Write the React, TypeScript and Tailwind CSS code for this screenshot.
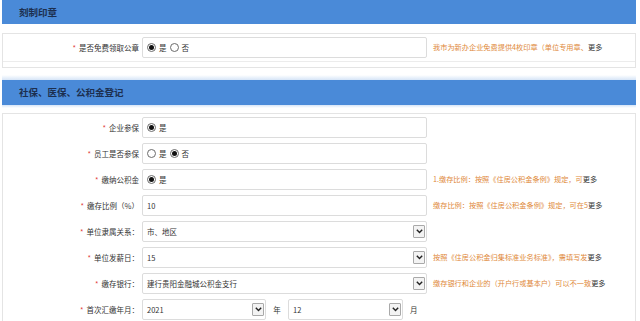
import React from 'react';

const FONT = '"Noto Sans CJK SC", "Noto Sans", sans-serif';

function Radio({ checked }: { checked?: boolean }) {
  return (
    <span className="w-[9px] h-[9px] rounded-full border border-[#6b6b6b] bg-white flex items-center justify-center shrink-0">
      {checked && <span className="w-[5px] h-[5px] rounded-full bg-[#111]" />}
    </span>
  );
}

function Chevron() {
  return (
    <span className="w-[12px] h-[13px] border border-[#a9a9a9] bg-[#f3f3f3] flex items-center justify-center shrink-0 rounded-[1px]">
      <svg width="7" height="5" viewBox="0 0 7 5">
        <path d="M0.8 0.8 L3.5 3.6 L6.2 0.8" fill="none" stroke="#222" strokeWidth="1.4" />
      </svg>
    </span>
  );
}

function Box({ children, w = 'w-[285px]' }: { children?: React.ReactNode; w?: string }) {
  return (
    <div className={`${w} h-[21px] border border-[#dcdcdc] rounded-[2px] bg-white flex items-center pl-[4px] pr-[1px] gap-[3px] text-[7.5px] text-[#333] shrink-0`}>
      {children}
    </div>
  );
}

function SelectBox({ value, w = 'w-[285px]' }: { value: string; w?: string }) {
  return (
    <Box w={w}>
      <span className="flex-1">{value}</span>
      <Chevron />
    </Box>
  );
}

function Label({ text }: { text: string }) {
  return (
    <div className="w-[139px] pr-[3px] text-right text-[7.5px] text-[#333] shrink-0">
      <span className="text-[#e23b3b] mr-[3px]">*</span>
      {text}
    </div>
  );
}

function Hint({ text }: { text?: string }) {
  if (!text) return null;
  return (
    <div className="ml-[6px] text-[7.2px] text-[#e0893a] whitespace-nowrap">
      {text}
      <span className="text-[#333]">更多</span>
    </div>
  );
}

function Row({ label, hint, children }: { label: string; hint?: string; children: React.ReactNode }) {
  return (
    <div className="flex items-center h-[21px]">
      <Label text={label} />
      {children}
      <Hint text={hint} />
    </div>
  );
}

function Header({ title, h }: { title: string; h: string }) {
  return (
    <div className={`${h} bg-[#4a8ad8] flex items-center pl-[17px] text-[9.5px] font-bold text-[#1c2f4f]`}>
      {title}
    </div>
  );
}

export default function App() {
  return (
    <div className="w-[640px] h-[321px] overflow-hidden bg-white pl-[2px] pr-[4px]" style={{ fontFamily: FONT }}>
      <Header title="刻制印章" h="h-[24px]" />

      <div className="mt-[9px] h-[35px] border border-[#e4e4e4]">
        <div className="h-[28px] border-b border-[#ececec] flex items-center">
          <Row label="是否免费领取公章" hint="我市为新办企业免费提供4枚印章（单位专用章、">
            <Box>
              <Radio checked />
              <span>是</span>
              <Radio />
              <span>否</span>
            </Box>
          </Row>
        </div>
      </div>

      <div className="mt-[7px] h-[5px] bg-gradient-to-b from-white to-[#d6e5f7]" />
      <Header title="社保、医保、公积金登记" h="h-[25px]" />
      <div className="h-[3px] bg-gradient-to-b from-[#d6e5f7] to-white" />

      <div className="mt-[5px] border border-b-0 border-[#e4e4e4] pt-[3px] flex flex-col gap-[5px] h-[220px]">
        <Row label="企业参保">
          <Box>
            <Radio checked />
            <span>是</span>
          </Box>
        </Row>
        <Row label="员工是否参保">
          <Box>
            <Radio />
            <span>是</span>
            <Radio checked />
            <span>否</span>
          </Box>
        </Row>
        <Row label="缴纳公积金" hint="1.缴存比例：按照《住房公积金条例》规定，可">
          <Box>
            <Radio checked />
            <span>是</span>
          </Box>
        </Row>
        <Row label="缴存比例（%）" hint="缴存比例：按照《住房公积金条例》规定，可在5">
          <Box>
            <span>10</span>
          </Box>
        </Row>
        <Row label="单位隶属关系：">
          <SelectBox value="市、地区" />
        </Row>
        <Row label="单位发薪日：" hint="按照《住房公积金归集标准业务标准》，需填写发">
          <SelectBox value="15" />
        </Row>
        <Row label="缴存银行：" hint="缴存银行和企业的（开户行或基本户）可以不一致">
          <SelectBox value="建行贵阳金融城公积金支行" />
        </Row>
        <Row label="首次汇缴年月：">
          <SelectBox value="2021" w="w-[124px]" />
          <span className="w-[22px] text-center text-[7.5px] text-[#333]">年</span>
          <SelectBox value="12" w="w-[115px]" />
          <span className="ml-[7px] text-[7.5px] text-[#333]">月</span>
        </Row>
      </div>
    </div>
  );
}
